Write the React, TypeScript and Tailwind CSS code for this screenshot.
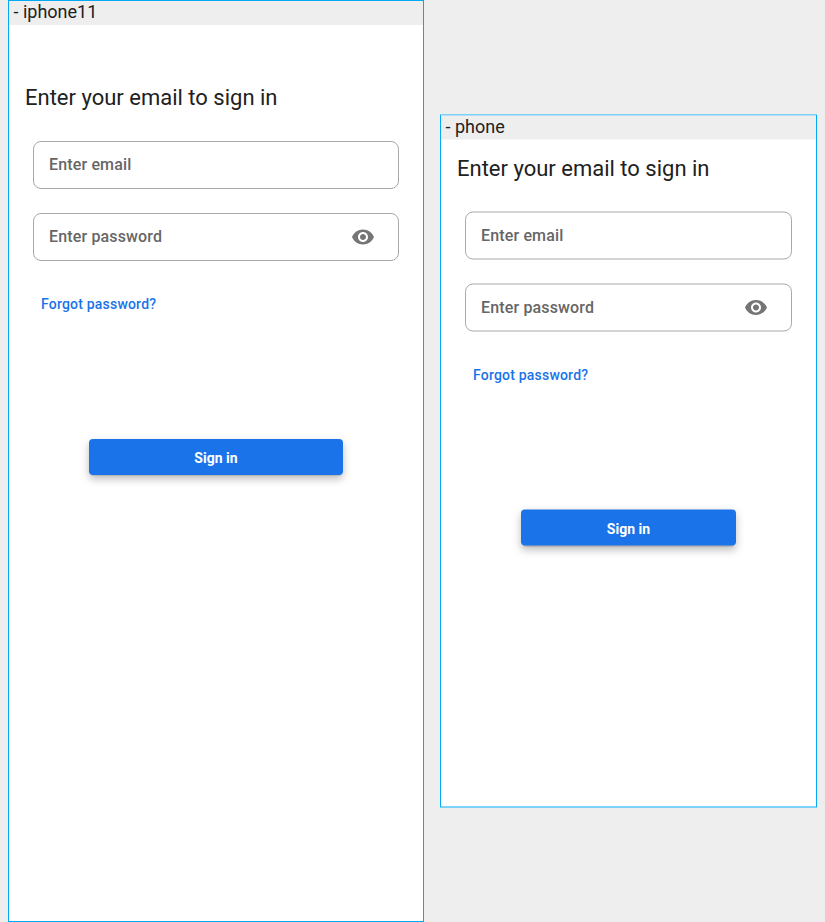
import React from "react";

type DeviceProps = {
  name: string;
  frame: string;
  heading: string;
};

function EyeIcon() {
  return (
    <svg className="h-6 w-6 shrink-0" viewBox="0 0 24 24" fill="#757575">
      <path d="M12 4.5C7 4.5 2.73 7.61 1 12c1.73 4.39 6 7.5 11 7.5s9.27-3.11 11-7.5c-1.73-4.39-6-7.5-11-7.5zM12 17c-2.76 0-5-2.24-5-5s2.24-5 5-5 5 2.24 5 5-2.24 5-5 5zm0-8c-1.66 0-3 1.34-3 3s1.34 3 3 3 3-1.34 3-3-1.34-3-3-3z" />
    </svg>
  );
}

function Field({ label, icon }: { label: string; icon?: boolean }) {
  return (
    <div className="flex h-12 items-center justify-between rounded-lg border border-[#a8a8a8] pr-[23px] pl-[15px]">
      <span className="text-base font-medium tracking-[0.15px] text-[#666]">{label}</span>
      {icon && <EyeIcon />}
    </div>
  );
}

function Device({ name, frame, heading }: DeviceProps) {
  return (
    <section className={`flex shrink-0 flex-col border border-[#03a9f4] bg-white ${frame}`}>
      <div className="h-6 bg-[#eee] pl-[4.5px] text-lg leading-[21px] text-[#212121]">- {name}</div>
      <h1 className={`pl-4 text-[22px] leading-8 text-[#212121] ${heading}`}>Enter your email to sign in</h1>
      <div className="mt-[27px] flex flex-col gap-6 px-6">
        <Field label="Enter email" />
        <Field label="Enter password" icon />
      </div>
      <a className="mt-[33px] pl-8 text-sm leading-5 font-medium tracking-[0.2px] text-[#1a73e8]">Forgot password?</a>
      <button className="mx-20 mt-[125px] h-9 rounded-[4px] bg-[#1a73e8] pt-0.5 text-sm font-bold tracking-[0.05px] text-white shadow-[0_3px_1px_-2px_rgba(0,0,0,0.12),0_4px_8px_rgba(0,0,0,0.26)]">
        Sign in
      </button>
    </section>
  );
}

export default function App() {
  return (
    <main className="flex h-[922px] w-[825px] items-center gap-4 overflow-hidden bg-[#eee] pl-2 font-[Roboto,sans-serif]">
      <Device name="iphone11" frame="h-[922px] w-[416px]" heading="mt-[57px]" />
      <Device name="phone" frame="h-[693px] w-[377px] [transform:translateY(-0.5px)]" heading="mt-[13px]" />
    </main>
  );
}
